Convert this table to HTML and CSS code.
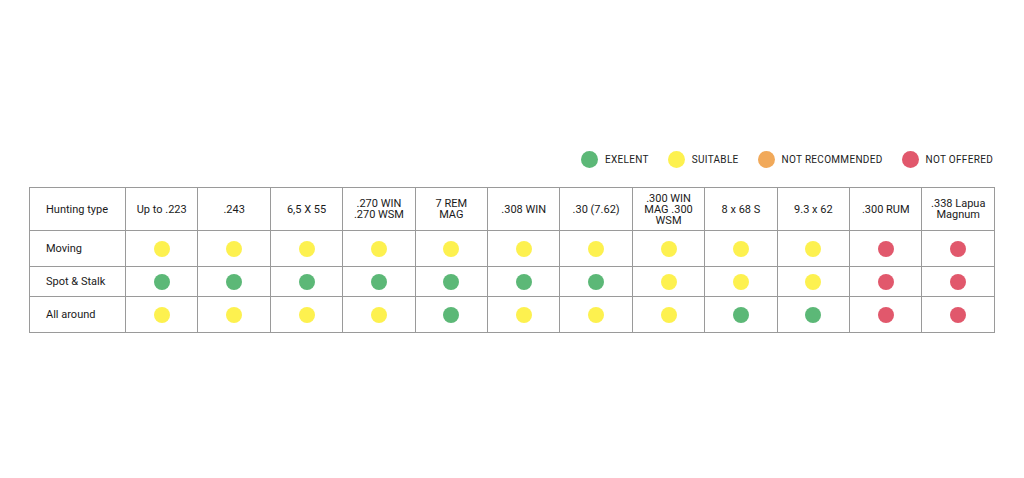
FILE: index.html
```html
<!DOCTYPE html>
<html>
<head>
<meta charset="utf-8">
<link rel="stylesheet" href="styles.css">
</head>
<body>
<div class="page">
  <div class="legend">
    <div class="legend-item"><span class="dot green"></span><span class="legend-label">EXELENT</span></div>
    <div class="legend-item"><span class="dot yellow"></span><span class="legend-label">SUITABLE</span></div>
    <div class="legend-item"><span class="dot orange"></span><span class="legend-label">NOT RECOMMENDED</span></div>
    <div class="legend-item"><span class="dot red"></span><span class="legend-label">NOT OFFERED</span></div>
  </div>
  <table class="chart">
    <colgroup>
      <col class="col-first">
      <col><col><col><col><col><col><col><col><col><col><col><col>
    </colgroup>
    <tr class="head-row">
      <td class="label">Hunting type</td>
      <td>Up to .223</td>
      <td>.243</td>
      <td>6,5 X 55</td>
      <td>.270 WIN<br>.270 WSM</td>
      <td>7 REM<br>MAG</td>
      <td>.308 WIN</td>
      <td>.30 (7.62)</td>
      <td>.300 WIN<br>MAG .300<br>WSM</td>
      <td>8 x 68 S</td>
      <td>9.3 x 62</td>
      <td>.300 RUM</td>
      <td>.338 Lapua<br>Magnum</td>
    </tr>
    <tr class="row-a">
      <td class="label">Moving</td>
      <td><span class="dot yellow"></span></td>
      <td><span class="dot yellow"></span></td>
      <td><span class="dot yellow"></span></td>
      <td><span class="dot yellow"></span></td>
      <td><span class="dot yellow"></span></td>
      <td><span class="dot yellow"></span></td>
      <td><span class="dot yellow"></span></td>
      <td><span class="dot yellow"></span></td>
      <td><span class="dot yellow"></span></td>
      <td><span class="dot yellow"></span></td>
      <td><span class="dot red"></span></td>
      <td><span class="dot red"></span></td>
    </tr>
    <tr class="row-b">
      <td class="label">Spot &amp; Stalk</td>
      <td><span class="dot green"></span></td>
      <td><span class="dot green"></span></td>
      <td><span class="dot green"></span></td>
      <td><span class="dot green"></span></td>
      <td><span class="dot green"></span></td>
      <td><span class="dot green"></span></td>
      <td><span class="dot green"></span></td>
      <td><span class="dot yellow"></span></td>
      <td><span class="dot yellow"></span></td>
      <td><span class="dot yellow"></span></td>
      <td><span class="dot red"></span></td>
      <td><span class="dot red"></span></td>
    </tr>
    <tr class="row-a">
      <td class="label">All around</td>
      <td><span class="dot yellow"></span></td>
      <td><span class="dot yellow"></span></td>
      <td><span class="dot yellow"></span></td>
      <td><span class="dot yellow"></span></td>
      <td><span class="dot green"></span></td>
      <td><span class="dot yellow"></span></td>
      <td><span class="dot yellow"></span></td>
      <td><span class="dot yellow"></span></td>
      <td><span class="dot green"></span></td>
      <td><span class="dot green"></span></td>
      <td><span class="dot red"></span></td>
      <td><span class="dot red"></span></td>
    </tr>
  </table>
</div>
</body>
</html>
```

FILE: styles.css
```css
html, body {
  margin: 0;
  padding: 0;
  background: #ffffff;
}

.page {
  width: 1024px;
  height: 478px;
  box-sizing: border-box;
  padding: 151px 29px 0 29px;
  font-family: Roboto, "Liberation Sans", Arial, sans-serif;
  color: #1a1a1a;
}

.legend {
  display: flex;
  justify-content: flex-end;
  align-items: center;
  gap: 19px;
  height: 17px;
  padding-right: 2px;
}

.legend-item {
  display: flex;
  align-items: center;
  gap: 7px;
}

.legend-label {
  font-size: 10px;
  letter-spacing: 0.3px;
  color: #222;
  line-height: 17px;
}

.legend .dot {
  width: 17px;
  height: 17px;
}

.dot {
  display: inline-block;
  width: 16px;
  height: 16px;
  border-radius: 50%;
  vertical-align: middle;
}

.green { background: #5cb877; }
.yellow { background: #fdf14f; }
.orange { background: #f1a95a; }
.red { background: #e1586c; }

.chart {
  margin-top: 19px;
  width: 966px;
  border-collapse: collapse;
  table-layout: fixed;
}

.col-first {
  width: 96px;
}

.chart td {
  border: 1px solid #9a9a9a;
  text-align: center;
  vertical-align: middle;
  padding: 0 2px;
  font-size: 11px;
  line-height: 11px;
  color: #1a1a1a;
}

.chart td .dot {
  display: block;
  margin: 0 auto;
}

.chart td.label {
  text-align: left;
  padding-left: 16px;
}

.head-row td {
  height: 42px;
}

.row-a td {
  height: 35px;
}

.row-b td {
  height: 29px;
}
```
